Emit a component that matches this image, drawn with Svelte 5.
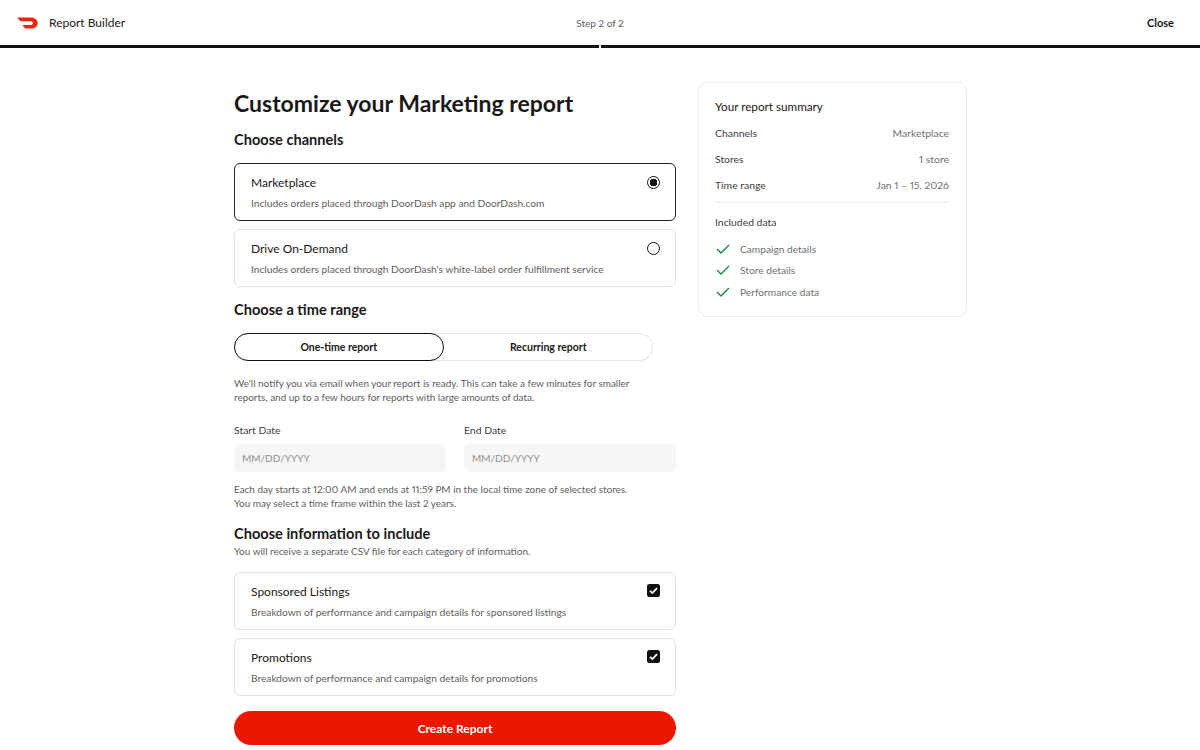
<script>
    const summary = [
        { label: "Channels", value: "Marketplace" },
        { label: "Stores", value: "1 store" },
        { label: "Time range", value: "Jan 1 – 15, 2026" },
    ];
    const included = ["Campaign details", "Store details", "Performance data"];
    const channels = [
        { name: "Marketplace", desc: "Includes orders placed through DoorDash app and DoorDash.com", selected: true },
        { name: "Drive On-Demand", desc: "Includes orders placed through DoorDash's white-label order fulfillment service", selected: false },
    ];
    const infos = [
        { name: "Sponsored Listings", desc: "Breakdown of performance and campaign details for sponsored listings" },
        { name: "Promotions", desc: "Breakdown of performance and campaign details for promotions" },
    ];
</script>

<div class="page">
    <header>
        <div class="brand">
            <svg class="logo" width="21" height="12" viewBox="0 0 21 12">
                <path d="M0.3 0.5 H13.6 C18 0.5 20.7 3.1 20.7 6 C20.7 9 18 11.6 13.9 11.6 H8.8 C8.4 11.6 8.1 11.4 7.8 11 L5.4 8.1 H13.9 C15.1 8.1 15.9 7.2 15.9 6.1 C15.9 5 15.1 4.2 13.9 4.2 H3.9 C3.5 4.2 3.2 4 2.9 3.7 Z" fill="#f0240a" />
            </svg>
            <span>Report Builder</span>
        </div>
        <div class="step">Step 2 of 2</div>
        <div class="close">Close</div>
    </header>
    <div class="progress">
        <div></div>
        <div></div>
    </div>

    <main>
        <section class="form">
            <h1>Customize your Marketing report</h1>

            <h2 class="channels-title">Choose channels</h2>
            <div class="cards">
                {#each channels as c}
                    <div class="card" class:active={c.selected}>
                        <div class="card-top">
                            <span class="card-name">{c.name}</span>
                            <span class="radio" class:on={c.selected}></span>
                        </div>
                        <div class="card-desc">{c.desc}</div>
                    </div>
                {/each}
            </div>

            <h2 class="range-title">Choose a time range</h2>
            <div class="toggle">
                <div class="tab selected">One-time report</div>
                <div class="tab">Recurring report</div>
            </div>
            <p class="note notify">
                We'll notify you via email when your report is ready. This can take a few minutes for smaller<br />
                reports, and up to a few hours for reports with large amounts of data.
            </p>

            <div class="dates">
                <div class="field">
                    <div class="field-label">Start Date</div>
                    <div class="input">MM/DD/YYYY</div>
                </div>
                <div class="field">
                    <div class="field-label">End Date</div>
                    <div class="input">MM/DD/YYYY</div>
                </div>
            </div>
            <p class="note tz">
                Each day starts at 12:00 AM and ends at 11:59 PM in the local time zone of selected stores.<br />
                You may select a time frame within the last 2 years.
            </p>

            <h2 class="info-title">Choose information to include</h2>
            <p class="note csv">You will receive a separate CSV file for each category of information.</p>
            <div class="cards">
                {#each infos as c}
                    <div class="card">
                        <div class="card-top">
                            <span class="card-name">{c.name}</span>
                            <span class="checkbox">
                                <svg width="13" height="13" viewBox="0 0 13 13">
                                    <path d="M3 6.8 L5.4 9.1 L10 4.1" fill="none" stroke="#fff" stroke-width="1.7" />
                                </svg>
                            </span>
                        </div>
                        <div class="card-desc">{c.desc}</div>
                    </div>
                {/each}
            </div>
            <button class="create">Create Report</button>
        </section>

        <aside>
            <div class="summary-title">Your report summary</div>
            {#each summary as row}
                <div class="row">
                    <span>{row.label}</span>
                    <span class="value">{row.value}</span>
                </div>
            {/each}
            <div class="divider"></div>
            <div class="included">Included data</div>
            {#each included as item}
                <div class="check-row">
                    <svg width="14" height="10" viewBox="0 0 14 10">
                        <path d="M1 5 L5 9 L13 1" fill="none" stroke="#0f8a3c" stroke-width="1.3" />
                    </svg>
                    <span>{item}</span>
                </div>
            {/each}
        </aside>
    </main>
</div>

<style>
    :global(body) {
        margin: 0;
        background: #fff;
    }

    .page {
        height: 750px;
        overflow: hidden;
        font-family: Lato, "Liberation Sans", sans-serif;
        font-variant-numeric: proportional-nums;
        color: #191919;
    }

    header {
        height: 45px;
        display: grid;
        grid-template-columns: 1fr auto 1fr;
        align-items: center;
    }

    .brand {
        display: flex;
        align-items: center;
        gap: 11px;
        padding-left: 17px;
        font-size: 12px;
    }

    .logo {
        display: block;
    }

    .step {
        font-size: 10px;
        color: #606060;
    }

    .close {
        justify-self: end;
        padding-right: 26px;
        font-size: 11px;
        font-weight: 700;
    }

    .progress {
        display: flex;
        gap: 2px;
        height: 3px;
    }

    .progress div {
        flex: 1;
        background: #111;
    }

    main {
        display: flex;
        align-items: flex-start;
        gap: 22px;
        padding: 34px 0 0 234px;
    }

    .form {
        width: 442px;
    }

    h1 {
        margin: 6px 0 0;
        font-size: 23px;
        line-height: 30px;
        font-weight: 700;
    }

    h2 {
        margin: 0;
        font-size: 14.6px;
        line-height: 18px;
        font-weight: 700;
    }

    .channels-title {
        margin-top: 13px;
        margin-bottom: 14px;
    }

    .range-title {
        margin-top: 14px;
        margin-bottom: 14px;
    }

    .info-title {
        margin-top: 15px;
    }

    .cards {
        display: flex;
        flex-direction: column;
        gap: 8px;
    }

    .card {
        box-sizing: border-box;
        height: 58px;
        padding: 10px 15px 0 16px;
        border: 1px solid #e2e2e2;
        border-radius: 6px;
    }

    .card.active {
        border-color: #222;
    }

    .card-top {
        display: flex;
        justify-content: space-between;
        align-items: center;
        height: 16px;
    }

    .card-name {
        font-size: 12px;
    }

    .card-desc {
        margin-top: 6px;
        font-size: 10.2px;
        line-height: 14px;
        color: #5e5e5e;
    }

    .radio {
        box-sizing: border-box;
        width: 13px;
        height: 13px;
        border: 1.2px solid #111;
        border-radius: 50%;
    }

    .radio.on {
        background: radial-gradient(circle, #111 0 3.6px, #fff 4px);
    }

    .checkbox {
        width: 13px;
        height: 13px;
        margin-top: -2px;
        display: block;
        background: #111;
        border-radius: 2.5px;
    }

    .checkbox svg {
        display: block;
    }

    .toggle {
        display: flex;
        width: 419px;
        height: 28px;
        border-radius: 14px;
        box-shadow: inset 0 0 0 1px #e6e6e6;
    }

    .tab {
        box-sizing: border-box;
        width: 50%;
        display: flex;
        align-items: center;
        justify-content: center;
        font-size: 10.5px;
        font-weight: 700;
        border-radius: 14px;
    }

    .tab.selected {
        border: 1.7px solid #111;
    }

    .note {
        margin: 0;
        font-size: 9.95px;
        line-height: 14px;
        color: #5e5e5e;
    }

    .notify {
        margin-top: 15px;
    }

    .dates {
        display: flex;
        gap: 18px;
        margin-top: 19px;
    }

    .field {
        flex: 1;
    }

    .field-label {
        font-size: 10.4px;
        line-height: 14px;
        color: #404040;
    }

    .input {
        box-sizing: border-box;
        height: 28px;
        margin-top: 7px;
        padding-left: 8px;
        display: flex;
        align-items: center;
        background: #f6f6f6;
        border-radius: 5px;
        font-size: 10px;
        color: #909090;
    }

    .tz {
        margin-top: 10px;
    }

    .csv {
        margin-top: 1px;
        margin-bottom: 14px;
    }

    .create {
        display: block;
        width: 100%;
        height: 34px;
        margin-top: 15px;
        padding: 0;
        border: none;
        border-radius: 17px;
        background: #eb1700;
        color: #fff;
        font-family: inherit;
        font-size: 12px;
        font-weight: 700;
    }

    aside {
        box-sizing: border-box;
        width: 269px;
        height: 235px;
        padding: 15px 17px 0 16px;
        border: 1px solid #ececec;
        border-radius: 9px;
    }

    .summary-title {
        font-size: 11.7px;
        line-height: 16px;
        margin-bottom: 12px;
    }

    .row {
        display: flex;
        justify-content: space-between;
        height: 26px;
        line-height: 14px;
        font-size: 10.4px;
        color: #404040;
    }

    .value {
        color: #707070;
    }

    .divider {
        height: 1px;
        margin-top: -2px;
        background: #ececec;
    }

    .included {
        margin-top: 12px;
        margin-bottom: 9px;
        font-size: 10.4px;
        line-height: 14px;
        color: #404040;
    }

    .check-row {
        display: flex;
        align-items: center;
        gap: 10px;
        height: 21.5px;
        padding-left: 1px;
        font-size: 10.2px;
        color: #707070;
    }
</style>
